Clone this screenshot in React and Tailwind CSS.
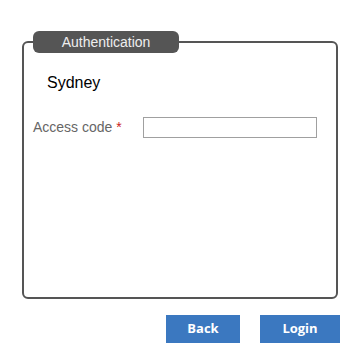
import React, { useState } from 'react';

const App = () => {
  const [code, setCode] = useState('');

  return (
    <div className="w-[359px] h-[350px] bg-white pt-[31px] pl-[22px] pr-[21px]" style={{ fontFamily: '"Liberation Sans", Arial, sans-serif' }}>
      <fieldset className="border-2 border-[#555555] rounded-[6px] pl-[9px] pr-[9px] h-[268px]">
        <legend className="bg-[#555555] rounded-[6px] h-[22px] w-[146px]">
          <span className="block text-center text-[#eeeeee] text-[14px] leading-[22px]">Authentication</span>
        </legend>

        {/* Location */}
        <div className="mt-[21px] pl-[14px] text-[16px] leading-[18px] text-black">Sydney</div>

        {/* Access code row */}
        <div className="mt-[25px] flex items-center">
          <label className="w-[110px] text-[14px] text-[#666666]">
            Access code <span className="text-[#cc2222]">*</span>
          </label>
          <input
            type="text"
            value={code}
            onChange={(e) => setCode(e.target.value)}
            className="w-[174px] h-[21px] border border-[#a0a0a0] bg-white px-1 text-[13px] outline-none"
          />
        </div>
      </fieldset>

      {/* Actions */}
      <div className="mt-[16px] flex justify-end gap-[20px]" style={{ fontFamily: '"Open Sans", sans-serif' }}>
        <button className="w-[74px] h-[28px] bg-[#3b78c0] text-white font-bold text-[13px]">Back</button>
        <button className="w-[80px] h-[28px] bg-[#3b78c0] text-white font-bold text-[13px] mr-[-2px]">Login</button>
      </div>
    </div>
  );
};

export default App;
